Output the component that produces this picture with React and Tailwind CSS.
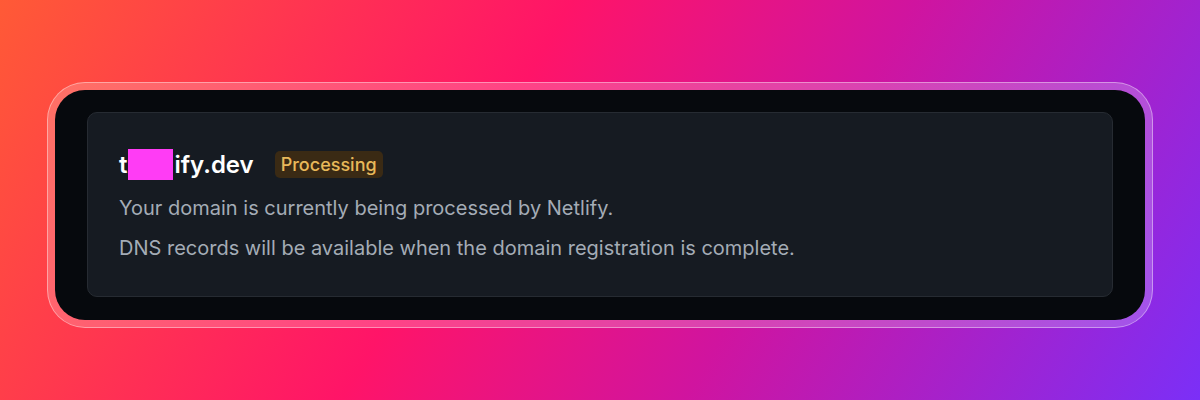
import React from "react";

const App = () => {
  return (
    <div className="flex h-[400px] w-[1200px] items-center justify-center bg-[linear-gradient(120deg,#ff5a36_0%,#ff1468_40%,#d0149f_64%,#7b2ff7_100%)] pt-[10px] font-['Inter','Liberation_Sans',sans-serif]">
      {/* frame */}
      <div className="rounded-[38px] border border-white/40 bg-white/20 p-[7px]">
        <div className="w-[1090px] rounded-[30px] bg-[#06090d] px-[32px] pb-[23px] pt-[22px]">
          <div className="rounded-[10px] border border-[#262b32] bg-[#161b22] px-[31px] pb-[34px] pt-[36px]">
            <div className="flex h-[31px] items-center gap-[21px]">
              <h2 className="flex items-center text-[24px] font-semibold leading-[31px] text-white">
                t
                <span className="mx-[1px] inline-block h-[31px] w-[45px] bg-[#ff3cf5]" />
                ify.dev
              </h2>
              <span className="rounded-[5px] bg-[#3a2a14] px-[6px] py-[2px] text-[18px] font-medium leading-[23px] text-[#e8b95a]">
                Processing
              </span>
            </div>
            <p className="mt-[14px] text-[20px] leading-[28px] text-[#a4acb6]">
              Your domain is currently being processed by Netlify.
            </p>
            <p className="mt-[12px] text-[20px] leading-[28px] text-[#a4acb6]">
              DNS records will be available when the domain registration is complete.
            </p>
          </div>
        </div>
      </div>
    </div>
  );
};

export default App;
